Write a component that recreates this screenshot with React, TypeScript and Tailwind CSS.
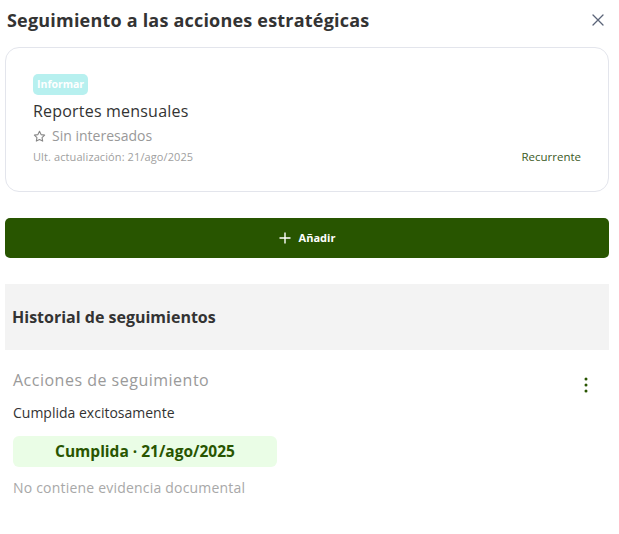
import React from "react";

const font = { fontFamily: '"Open Sans", "Noto Sans", sans-serif' };

export default function App() {
  return (
    <div className="w-[619px] h-[534px] bg-white text-[#333]" style={font}>
      <div className="flex items-center justify-between pl-[7px] pr-[15px] h-[40px]">
        <h1 className="text-[18px] font-bold text-[#333] tracking-[0.2px]">Seguimiento a las acciones estratégicas</h1>
        <svg width="12" height="12" viewBox="0 0 12 12" className="text-[#5b6478]">
          <path d="M1 1 L11 11 M11 1 L1 11" stroke="currentColor" strokeWidth="1.3" strokeLinecap="round" />
        </svg>
      </div>
      <div className="px-[5px] pr-[10px]">
        <div className="mt-[7px] border border-[#e3e5ec] rounded-[14px] pl-[27px] pr-[27px] pt-[22px] pb-[26px]">
          <span className="inline-block bg-[#b7f0ef] text-white text-[10.5px] font-bold rounded-[5px] px-[4px] h-[21px] leading-[21px]">Informar</span>
          <div className="mt-[5px] text-[16px] leading-[22px] text-[#333] tracking-[0.2px]">Reportes mensuales</div>
          <div className="mt-[5px] flex items-center gap-[6px] text-[14px] text-[#999] leading-[18px]">
            <svg width="13" height="13" viewBox="0 0 24 24" fill="none" stroke="#888" strokeWidth="2" strokeLinejoin="round">
              <path d="M12 2.5l2.9 6 6.6.9-4.8 4.6 1.2 6.5L12 17.4l-5.9 3.1 1.2-6.5L2.5 9.4l6.6-.9z" />
            </svg>
            <span>Sin interesados</span>
          </div>
          <div className="mt-[4px] flex items-center justify-between text-[11px] leading-[16px]">
            <span className="text-[#a0a0a0] tracking-[0.1px]">Ult. actualización: 21/ago/2025</span>
            <span className="text-[#3b5a1e] text-[11.5px]">Recurrente</span>
          </div>
        </div>
        <button className="mt-[26px] w-full h-[40px] bg-[#285500] rounded-[5px] flex items-center justify-center gap-[8px] text-white text-[11px] font-bold">
          <svg width="12" height="12" viewBox="0 0 12 12">
            <path d="M6 0.5 V11.5 M0.5 6 H11.5" stroke="white" strokeWidth="1.4" />
          </svg>
          <span>Añadir</span>
        </button>
        <div className="mt-[26px] h-[66px] bg-[#f3f3f3] flex items-center pl-[7px]">
          <h2 className="text-[16px] font-bold text-[#333]">Historial de seguimientos</h2>
        </div>
        <div className="pl-[8px] pt-[19px]">
          <div className="flex items-start justify-between pr-[21px]">
            <div className="text-[16px] text-[#9a9a9a] leading-[22px] tracking-[0.5px]">Acciones de seguimiento</div>
            <svg width="4" height="16" viewBox="0 0 4 16" className="mt-[8px]">
              <circle cx="2" cy="2" r="1.5" fill="#285500" />
              <circle cx="2" cy="8" r="1.5" fill="#285500" />
              <circle cx="2" cy="14" r="1.5" fill="#285500" />
            </svg>
          </div>
          <div className="mt-[11px] text-[14px] text-[#333] leading-[18px]">Cumplida excitosamente</div>
          <div className="mt-[14px] w-[264px] h-[31px] rounded-[6px] bg-[#eafde6] flex items-center justify-center text-[15.5px] font-bold text-[#285500]">
            Cumplida · 21/ago/2025
          </div>
          <div className="mt-[12px] text-[14px] text-[#a8a8a8] leading-[18px] tracking-[0.2px]">No contiene evidencia documental</div>
        </div>
      </div>
    </div>
  );
}
